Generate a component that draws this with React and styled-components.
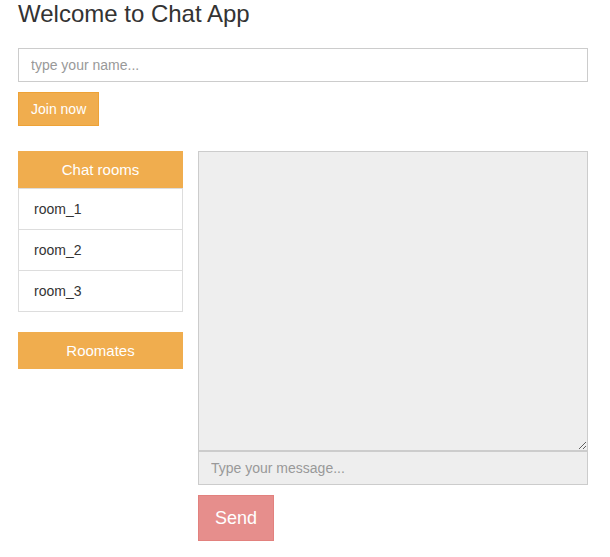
import React from 'react';
import styled, { createGlobalStyle } from 'styled-components';

const GlobalStyle = createGlobalStyle`
  * { box-sizing: border-box; }
  body {
    margin: 0;
    background: #fff;
    color: #333;
    font-family: "Liberation Sans", Arial, sans-serif;
    font-size: 14px;
    line-height: 1.42857;
  }
`;

const Page = styled.div`
  padding: 1px 22px 0 18px;
`;

const Title = styled.h3`
  margin: 0 0 21px;
  font-size: 24px;
  font-weight: 500;
  line-height: 26px;
  color: #333;
`;

const TextInput = styled.input`
  display: block;
  width: 100%;
  height: 34px;
  padding: 6px 12px;
  font-family: inherit;
  font-size: 14px;
  color: #555;
  background: ${p => (p.disabled ? '#eee' : '#fff')};
  border: 1px solid #ccc;
  border-radius: 0;
  outline: none;
  &::placeholder { color: #999; }
`;

const Button = styled.button`
  display: inline-block;
  font-family: inherit;
  font-size: ${p => (p.$large ? '18px' : '14px')};
  line-height: ${p => (p.$large ? '1.3333' : '1.42857')};
  padding: ${p => (p.$large ? '11px 16px 9px' : '7px 12px 5px')};
  color: #fff;
  background: ${p => (p.$danger ? '#d9534f' : '#f0ad4e')};
  border: 1px solid ${p => (p.$danger ? '#d43f3a' : '#eea236')};
  border-radius: 0;
  opacity: ${p => (p.disabled ? 0.65 : 1)};
`;

const JoinRow = styled.div`
  margin-top: 10px;
`;

const Main = styled.div`
  display: flex;
  gap: 15px;
  margin-top: 25px;
  align-items: flex-start;
`;

const Sidebar = styled.div`
  width: 165px;
  flex-shrink: 0;
  display: flex;
  flex-direction: column;
  gap: 20px;
`;

const Header = styled.div`
  height: 37px;
  display: flex;
  align-items: center;
  justify-content: center;
  background: #f0ad4e;
  color: #fff;
  font-size: 15px;
`;

const List = styled.ul`
  list-style: none;
  margin: 0;
  padding: 0;
`;

const Item = styled.li`
  padding: 10px 15px;
  border: 1px solid #ddd;
  margin-bottom: -1px;
  background: #fff;
  color: #333;
  line-height: 20px;
  &:last-child { margin-bottom: 0; }
`;

const ChatColumn = styled.div`
  flex: 1;
  display: flex;
  flex-direction: column;
`;

const Messages = styled.textarea`
  display: block;
  width: 100%;
  height: 300px;
  background: #eee;
  border: 1px solid #ccc;
  border-radius: 0;
  margin: 0;
  outline: none;
`;

const SendRow = styled.div`
  margin-top: 10px;
`;

export default function App() {
  const rooms = ['room_1', 'room_2', 'room_3'];
  return (
    <>
      <GlobalStyle />
      <Page>
        <Title>Welcome to Chat App</Title>
        <TextInput placeholder="type your name..." />
        <JoinRow>
          <Button>Join now</Button>
        </JoinRow>
        <Main>
          <Sidebar>
            <div>
              <Header>Chat rooms</Header>
              <List>
                {rooms.map(r => (
                  <Item key={r}>{r}</Item>
                ))}
              </List>
            </div>
            <Header>Roomates</Header>
          </Sidebar>
          <ChatColumn>
            <Messages readOnly disabled />
            <TextInput disabled placeholder="Type your message..." />
            <SendRow>
              <Button $large $danger disabled>Send</Button>
            </SendRow>
          </ChatColumn>
        </Main>
      </Page>
    </>
  );
}
